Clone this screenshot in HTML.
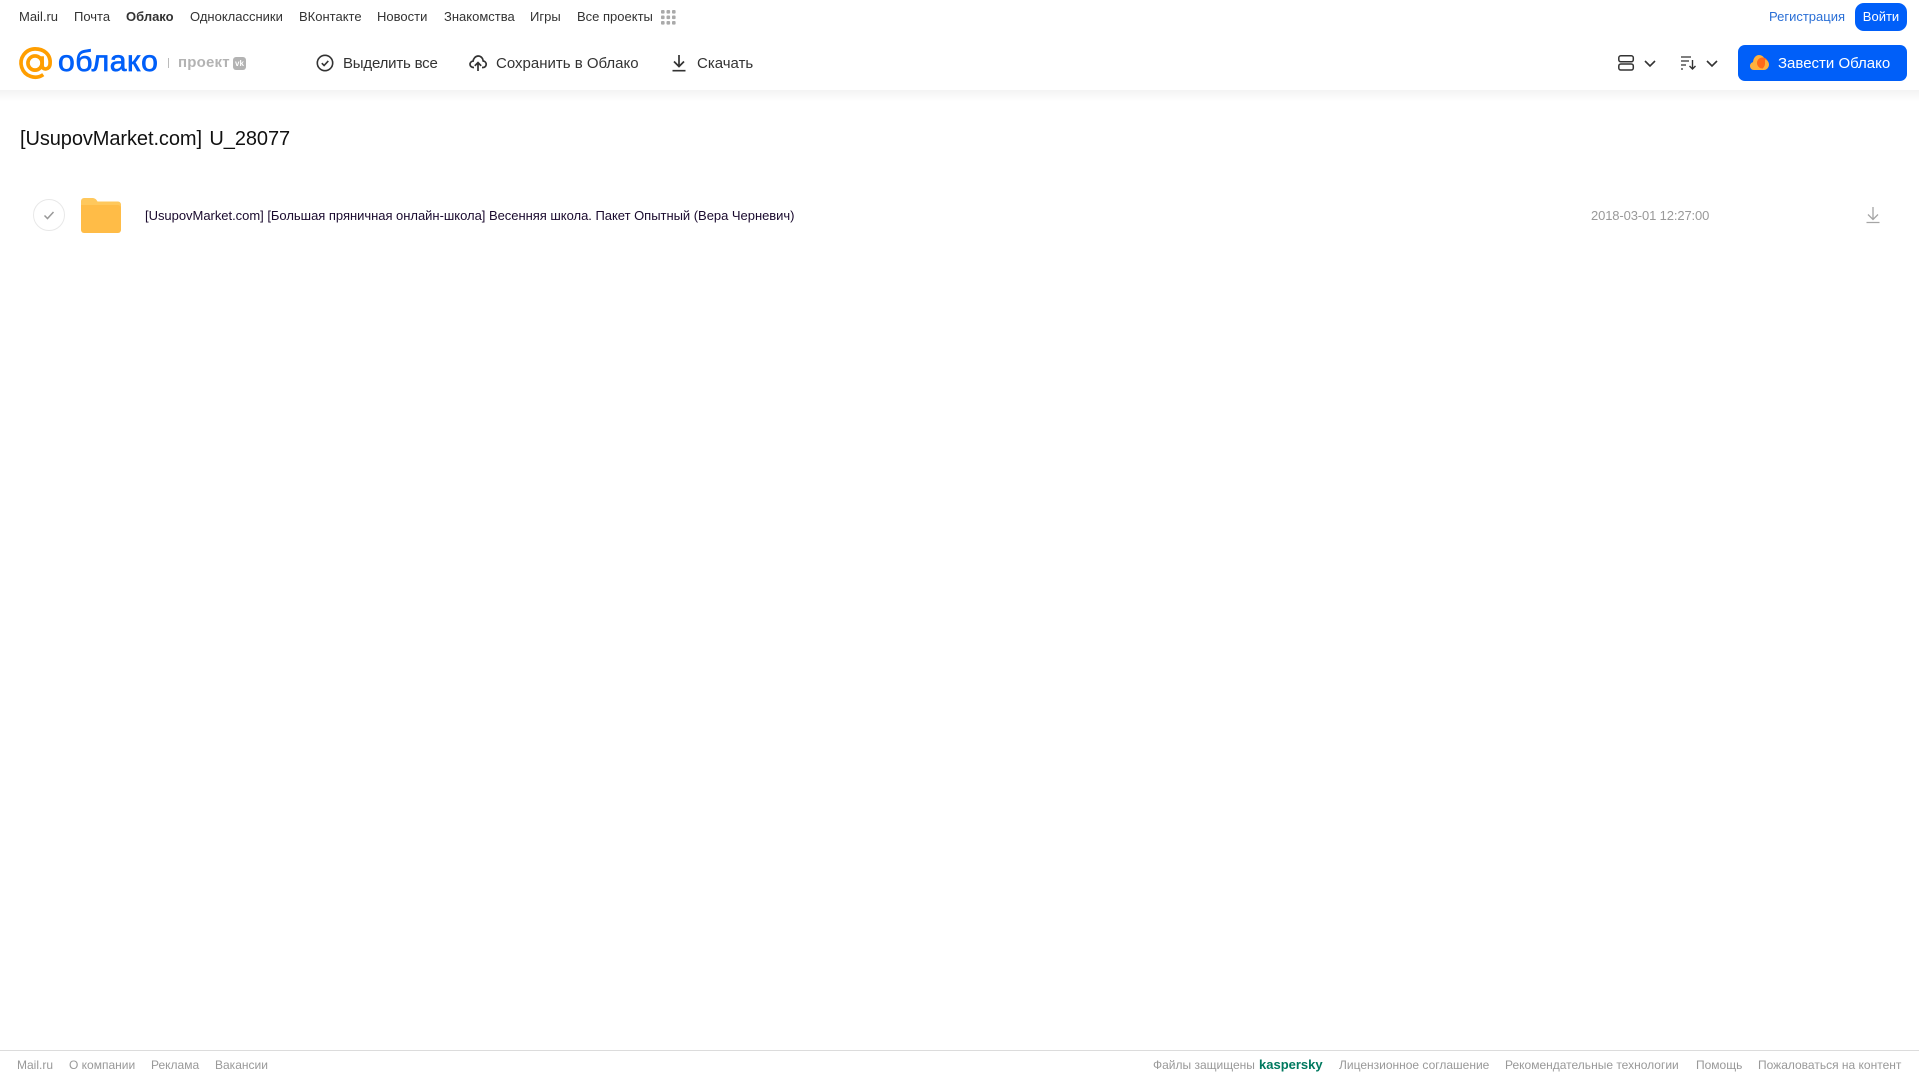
<!DOCTYPE html>
<html lang="ru"><head><meta charset="utf-8"><title>Облако</title>
<style>
html,body{margin:0;padding:0;background:#fff;width:1919px;height:1079px;overflow:hidden;font-family:"Liberation Sans",sans-serif}
.t{position:absolute;white-space:nowrap;line-height:16px}
.n{top:9px;font-size:13px;color:#333}
.b{top:56px;font-size:15px;color:#333;line-height:16px}
.f{top:1057px;font-size:12px;color:#999}
svg{position:absolute;overflow:visible}
#shadow{position:absolute;left:0;top:90px;width:1919px;height:12px;background:linear-gradient(#f3f3f3,#fff)}
#foot{position:absolute;left:0;top:1050px;width:1919px;height:1px;background:#dcdcdc}
.btn{position:absolute;background:#005ff9;color:#fff;text-align:center}
</style></head><body>
<div id="shadow"></div>
<span class="t n" style="left:19px">Mail.ru</span>
<span class="t n" style="left:74px">Почта</span>
<span class="t n" style="left:126px;font-weight:bold">Облако</span>
<span class="t n" style="left:190px">Одноклассники</span>
<span class="t n" style="left:299px">ВКонтакте</span>
<span class="t n" style="left:377px">Новости</span>
<span class="t n" style="left:444px">Знакомства</span>
<span class="t n" style="left:530px">Игры</span>
<span class="t n" style="left:577px">Все проекты</span>
<svg style="left:661px;top:10px" width="15" height="15" fill="#aaa">
<rect x="0" y="0" width="3.6" height="3.6" rx="1"/><rect x="5.5" y="0" width="3.6" height="3.6" rx="1"/><rect x="11" y="0" width="3.6" height="3.6" rx="1"/>
<rect x="0" y="5.5" width="3.6" height="3.6" rx="1"/><rect x="5.5" y="5.5" width="3.6" height="3.6" rx="1"/><rect x="11" y="5.5" width="3.6" height="3.6" rx="1"/>
<rect x="0" y="11" width="3.6" height="3.6" rx="1"/><rect x="5.5" y="11" width="3.6" height="3.6" rx="1"/><rect x="11" y="11" width="3.6" height="3.6" rx="1"/>
</svg>
<span class="t n" style="left:1769px;color:#2a6fd6">Регистрация</span>
<div class="btn" style="left:1855px;top:3px;width:52px;height:28px;border-radius:9px;font-size:13px;line-height:27px">Войти</div>

<!-- logo -->
<svg style="left:19px;top:47px" width="33" height="33" viewBox="0 0 34 34" fill="none" stroke="#ff9e00" stroke-width="3.800">
<circle cx="16.5" cy="16.5" r="7.300"/>
<path d="M23.8 9.500v9.500c0 5 7.700 5 8.200-1.500 C33 7 25 1.900 16.500 1.900 A14.600 14.600 0 1 0 25 28.500"/>
</svg>
<span class="t" style="left:58px;top:44px;font-size:30px;line-height:36px;color:#005ff9;-webkit-text-stroke:.7px #005ff9;letter-spacing:.5px;transform:scaleX(1.005);transform-origin:0 0">облако</span>
<div style="position:absolute;left:168px;top:58px;width:1px;height:10px;background:#bbb"></div>
<span class="t" style="left:178px;top:55px;font-size:15px;color:#b3b3b3;font-weight:bold;letter-spacing:.2px">проект</span>
<div style="position:absolute;left:233px;top:57px;width:13px;height:13px;border-radius:3px;background:#b3b3b3"></div>
<span class="t" style="left:234px;top:57px;width:11px;text-align:center;font-size:8px;line-height:13px;color:#fff;font-weight:bold">vk</span>

<!-- toolbar -->
<svg style="left:316px;top:54px" width="18" height="18" viewBox="0 0 18 18" fill="none" stroke="#333" stroke-width="1.600">
<circle cx="9" cy="9" r="7.700"/><path d="M5.800 9.200l2.300 2.300 4.200-4.600"/></svg>
<span class="t b" style="left:343px;letter-spacing:-.2px">Выделить все</span>
<svg style="left:469px;top:54px" width="18" height="18" viewBox="0 0 18 18" fill="none" stroke="#333" stroke-width="1.700">
<path d="M5 13.500H4.500C2.500 13.500 1 12 1 10.300 1 8.500 2.500 7.200 4 7.200 4.500 4.500 6.500 2 9.200 2 12 2 14 4.300 14.200 7c1.600.2 3 1.500 3 3.300 0 1.800-1.500 3.200-3.300 3.200H13"/>
<path d="M9 17V9M5.800 11.800L9 8.600l3.200 3.200"/></svg>
<span class="t b" style="left:496px">Сохранить в Облако</span>
<svg style="left:671px;top:54px" width="16" height="18" viewBox="0 0 16 18" fill="none" stroke="#333" stroke-width="1.700">
<path d="M8 1v11M3 7.500l5 5 5-5M1.500 16.700h13"/></svg>
<span class="t b" style="left:697px">Скачать</span>

<svg style="left:1618px;top:55px" width="16" height="16" viewBox="0 0 16 16" fill="none" stroke="#333" stroke-width="1.500">
<rect x=".8" y=".8" width="14.500" height="6" rx="2"/><rect x=".8" y="9" width="14.500" height="6" rx="2"/></svg>
<svg style="left:1644px;top:60px" width="12" height="7" viewBox="0 0 12 7" fill="none" stroke="#333" stroke-width="1.600"><path d="M1 1l5 5 5-5"/></svg>
<svg style="left:1681px;top:56px" width="16" height="14" viewBox="0 0 16 14" fill="none" stroke="#333" stroke-width="1.300">
<path d="M0 1h10M0 5h8M0 9h5M0 13h2"/><path d="M11.500 4v9M8.500 10l3 3 3-3" stroke-width="1.400"/></svg>
<svg style="left:1706px;top:60px" width="12" height="7" viewBox="0 0 12 7" fill="none" stroke="#333" stroke-width="1.600"><path d="M1 1l5 5 5-5"/></svg>

<div class="btn" style="left:1738px;top:45px;width:169px;height:36px;border-radius:7px"></div>
<svg style="left:1750px;top:54px" width="19" height="17" viewBox="0 0 19 17">
<path fill="#ffb13d" d="M4 16C1.800 16 0 14.300 0 12c0-2 1.300-3.500 3-3.900C3.300 4 6 1 9 1c2.500 0 4.500 1.500 5.500 3.500L12 16z"/>
<circle cx="12.500" cy="9" r="5.500" fill="#ff6a1a"/>
<path fill="#ffb13d" d="M15 5.500c2.300.5 4 2.600 4 5 0 3-2.300 5.500-5 5.500H8c4 0 7-3 7-6.500z"/></svg>
<span class="t" style="left:1778px;top:56px;font-size:15px;color:#fff">Завести Облако</span>

<!-- title -->
<span class="t" style="left:20px;top:127px;font-size:20px;line-height:24px;word-spacing:2px;letter-spacing:-.08px;color:#111">[UsupovMarket.com] U_28077</span>

<!-- row -->
<svg style="left:33px;top:199px" width="32" height="32" viewBox="0 0 32 32" fill="none">
<circle cx="16" cy="16" r="15.500" stroke="#e8e8e8"/><path d="M11.500 16.500l3 3 6-6.500" stroke="#999" stroke-width="1.500"/></svg>
<svg style="left:81px;top:198px" width="40" height="35" viewBox="0 0 40 35">
<path fill="#ffc85c" d="M0 3a3 3 0 0 1 3-3h8c3 0 4 1 5.500 3.500H37a3 3 0 0 1 3 3V10H0z"/>
<path fill="#ffbc47" d="M0 7h37a3 3 0 0 1 3 3v22a3 3 0 0 1-3 3H3a3 3 0 0 1-3-3z"/></svg>
<span class="t" style="left:145px;top:208px;font-size:13px;letter-spacing:-.025px;color:#1a0a2e">[UsupovMarket.com] [Большая пряничная онлайн-школа] Весенняя школа. Пакет Опытный (Вера Черневич)</span>
<span class="t" style="left:1591px;top:208px;font-size:13px;letter-spacing:-.13px;color:#999">2018-03-01 12:27:00</span>
<svg style="left:1866px;top:206px" width="14" height="18" viewBox="0 0 14 18" fill="none" stroke="#a5a5a5" stroke-width="1.300">
<path d="M7 1v12M2 8.500l5 5 5-5M.5 16.500h13"/></svg>

<!-- footer -->
<div id="foot"></div>
<span class="t f" style="left:17px">Mail.ru</span>
<span class="t f" style="left:69px">О компании</span>
<span class="t f" style="left:151px">Реклама</span>
<span class="t f" style="left:215px">Вакансии</span>
<span class="t f" style="left:1153px">Файлы защищены</span>
<span class="t f" style="left:1259px;font-size:13px;font-weight:bold;color:#00795f">kaspersky</span>
<span class="t f" style="left:1339px">Лицензионное соглашение</span>
<span class="t f" style="left:1505px">Рекомендательные технологии</span>
<span class="t f" style="left:1696px">Помощь</span>
<span class="t f" style="left:1758px">Пожаловаться на контент</span>
</body></html>
